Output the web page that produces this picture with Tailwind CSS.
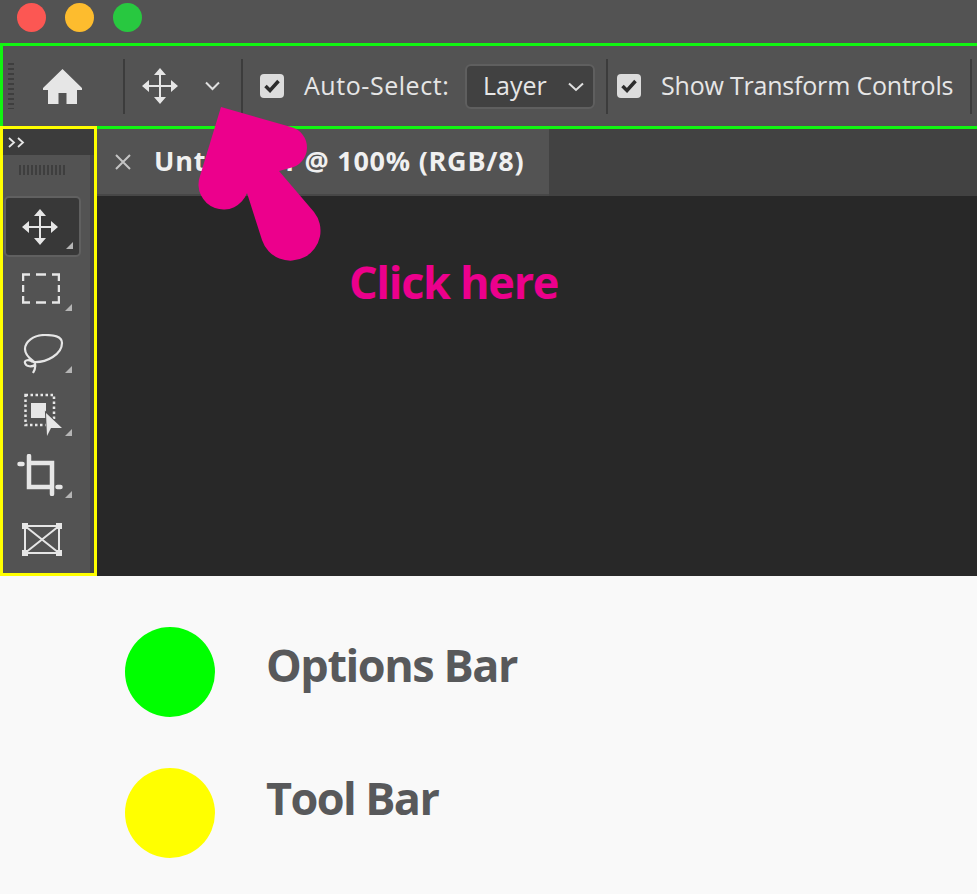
<!DOCTYPE html>
<html lang="en">
<head>
    <meta charset="UTF-8">
    <title>Photoshop Options Bar and Tool Bar</title>
    <script src="https://cdn.jsdelivr.net/npm/@tailwindcss/browser@4"></script>
</head>
<body class="bg-[#f9f9f9] font-['Open_Sans',sans-serif]">
    <div class="relative w-[977px] h-[894px] overflow-hidden">
        <!-- Title bar -->
        <div class="h-[43px] bg-[#535353] flex items-center pb-[9px] pl-[17px] gap-[19px]">
            <div class="w-[29px] h-[29px] rounded-full bg-[#fc5753]"></div>
            <div class="w-[29px] h-[29px] rounded-full bg-[#fdbc2e]"></div>
            <div class="w-[29px] h-[29px] rounded-full bg-[#28c840]"></div>
        </div>

        <!-- Options bar -->
        <div class="h-[86px] border-[3px] border-r-0 border-[#11f511] bg-[#535353] flex items-center text-[#e6e6e6] text-[25px]">
            <div class="ml-[5px] w-[6px] h-[46px] bg-[repeating-linear-gradient(to_bottom,#3e3e3e_0,#3e3e3e_2px,transparent_2px,transparent_5px)]"></div>
            <svg class="ml-[29px] w-[39px] h-[35px]" viewBox="0 0 39 35" fill="#e6e6e6"><path d="M19.500 0 L39 19 L39 21 L34 21 L34 35 L23.500 35 L23.500 24 L15.500 24 L15.500 35 L5 35 L5 21 L0 21 L0 19 Z"/></svg>
            <div class="ml-[41px] w-[2px] h-[55px] bg-[#3c3c3c]"></div>
            <svg class="ml-[17px] w-[36px] h-[36px]" viewBox="0 0 36 36" fill="#e6e6e6"><path d="M18 0 L24 7 L12 7 Z M18 36 L24 29 L12 29 Z M0 18 L7 12 L7 24 Z M36 18 L29 12 L29 24 Z"/><path d="M18 5 V31 M5 18 H31" stroke="#e6e6e6" stroke-width="2"/></svg>
            <svg class="ml-[27px] w-[15px] h-[10px]" viewBox="0 0 15 10" fill="none" stroke="#e0e0e0" stroke-width="2"><path d="M1 1.500 L7.500 8 L14 1.500"/></svg>
            <div class="ml-[21px] w-[2px] h-[55px] bg-[#3c3c3c]"></div>
            <div class="ml-[17px] w-[24px] h-[24px] rounded-[4px] bg-[#dcdcdc] flex items-center justify-center">
                <svg class="w-[16px] h-[14px]" viewBox="0 0 16 14" fill="none" stroke="#2c2c2c" stroke-width="3.500"><path d="M1.500 7 L6 11.500 L14.500 2"/></svg>
            </div>
            <div class="ml-[20px] w-[161px] leading-none pb-[2px] tracking-[0.55px]">Auto-Select:</div>
            <div class="w-[130px] h-[45px] rounded-[6px] bg-[#414141] border-2 border-[#5f5f5f] flex items-center pl-[16px] pb-[2px] leading-none">
                Layer
                <svg class="ml-[21px] mt-[4px] w-[16px] h-[10px]" viewBox="0 0 16 10" fill="none" stroke="#e0e0e0" stroke-width="2"><path d="M1 1.500 L8 8 L15 1.500"/></svg>
            </div>
            <div class="ml-[11px] w-[2px] h-[55px] bg-[#3c3c3c]"></div>
            <div class="ml-[9px] w-[24px] h-[24px] rounded-[4px] bg-[#dcdcdc] flex items-center justify-center">
                <svg class="w-[16px] h-[14px]" viewBox="0 0 16 14" fill="none" stroke="#2c2c2c" stroke-width="3.500"><path d="M1.500 7 L6 11.500 L14.500 2"/></svg>
            </div>
            <div class="ml-[20px] w-[309px] leading-none pb-[2px] whitespace-nowrap tracking-[-0.2px]">Show Transform Controls</div>
            <div class="w-[2px] h-[55px] bg-[#3c3c3c]"></div>
        </div>

        <div class="flex h-[447px]">
            <!-- Tool bar -->
            <div class="relative -mt-[3px] w-[97px] h-[450px] border-[3px] border-[#ffff00] bg-[#535353] flex flex-col">
                <div class="h-[26px] bg-[#3c3c3c] flex items-center pl-[5px] gap-[1px] shrink-0">
                    <svg class="w-[17px] h-[11px]" viewBox="0 0 17 11" fill="none" stroke="#e6e6e6" stroke-width="1.800"><path d="M1 1 L6 5.500 L1 10 M10 1 L15 5.500 L10 10"/></svg>
                </div>
                <div class="ml-[16px] mt-[10px] w-[46px] h-[10px] shrink-0 bg-[repeating-linear-gradient(to_right,#3e3e3e_0,#3e3e3e_2px,transparent_2px,transparent_4px)]"></div>
                <div class="mt-[21px] w-[87px] flex flex-col">
                    <!-- Move -->
                    <div class="relative ml-[1px] w-[77px] h-[61px] rounded-[5px] bg-[#383838] border-2 border-[#606060] flex items-center justify-center pr-[5px] shrink-0">
                        <svg class="w-[36px] h-[36px]" viewBox="0 0 36 36" fill="#e6e6e6"><path d="M18 0 L24 7 L12 7 Z M18 36 L24 29 L12 29 Z M0 18 L7 12 L7 24 Z M36 18 L29 12 L29 24 Z"/><path d="M18 5 V31 M5 18 H31" stroke="#e6e6e6" stroke-width="2"/></svg>
                        <div class="absolute right-[6px] bottom-[6px] w-[7px] h-[7px] bg-[#b5b5b5] [clip-path:polygon(100%_0,100%_100%,0_100%)]"></div>
                    </div>
                    <!-- Marquee -->
                    <div class="relative h-[62px] shrink-0">
                        <svg class="absolute left-[19px] top-[16px] w-[38px] h-[31px]" viewBox="0 0 38 31" fill="none" stroke="#e6e6e6" stroke-width="2.500"><path d="M1 8 V1.500 H8 M14 1.500 H24 M30 1.500 H37 V8 M37 12 V19 M37 23 V29.500 H30 M24 29.500 H14 M8 29.500 H1 V23 M1 19 V12"/></svg>
                        <div class="absolute left-[62px] top-[47px] w-[7px] h-[7px] bg-[#b5b5b5] [clip-path:polygon(100%_0,100%_100%,0_100%)]"></div>
                    </div>
                    <!-- Lasso -->
                    <div class="relative h-[62px] shrink-0">
                        <svg class="absolute left-[20px] top-[15px] w-[42px] h-[42px]" viewBox="0 0 42 42" fill="none" stroke="#e6e6e6" stroke-width="2.200"><path d="M10 28 C24 29 39 20 39 9 C39 2 30 1 22 1 C10 1 2 8 2 15 C2 20 6 24 10 27 C13 29 13 34 10 39 M10 28 C6 25 1 26 2 29 C3 33 9 33 12 31"/></svg>
                        <div class="absolute left-[62px] top-[47px] w-[7px] h-[7px] bg-[#b5b5b5] [clip-path:polygon(100%_0,100%_100%,0_100%)]"></div>
                    </div>
                    <!-- Select subject -->
                    <div class="relative h-[62px] shrink-0">
                        <svg class="absolute left-[21px] top-[12px] w-[40px] h-[44px]" viewBox="0 0 40 44" fill="#e6e6e6"><path d="M1.500 2 H30 V32 H1.500 Z" fill="none" stroke="#e6e6e6" stroke-width="2.500" stroke-dasharray="2.500 2.500"/><path d="M7 10 H22 V25 H7 Z"/><path d="M22 20 L38 35 L27 35 L23 43 Z" stroke="#535353" stroke-width="2" paint-order="stroke"/></svg>
                        <div class="absolute left-[62px] top-[48px] w-[7px] h-[7px] bg-[#b5b5b5] [clip-path:polygon(100%_0,100%_100%,0_100%)]"></div>
                    </div>
                    <!-- Crop -->
                    <div class="relative h-[62px] shrink-0">
                        <svg class="absolute left-[14px] top-[11px] w-[46px] h-[42px]" viewBox="0 0 46 42" fill="none" stroke="#e6e6e6" stroke-width="4.500" stroke-linecap="round"><path d="M12 2 V33 H35 M12 9 H35 V40 M2.500 10 H5.500 M40.500 33 H43.500"/></svg>
                        <div class="absolute left-[62px] top-[48px] w-[7px] h-[7px] bg-[#b5b5b5] [clip-path:polygon(100%_0,100%_100%,0_100%)]"></div>
                    </div>
                    <!-- Frame -->
                    <div class="relative h-[62px] shrink-0">
                        <svg class="absolute left-[19px] top-[18px] w-[40px] h-[33px]" viewBox="0 0 40 33" fill="#e6e6e6"><path d="M3 3 H37 V30 H3 Z M3 3 L37 30 M37 3 L3 30" fill="none" stroke="#e6e6e6" stroke-width="2"/><rect x="0" y="0" width="6" height="6"/><rect x="34" y="0" width="6" height="6"/><rect x="0" y="27" width="6" height="6"/><rect x="34" y="27" width="6" height="6"/></svg>
                    </div>
                </div>
                <div class="absolute right-0 top-[26px] bottom-0 w-[4px] bg-[#464646]"></div>
            </div>

            <!-- Document area -->
            <div class="flex-1 flex flex-col">
                <div class="h-[67px] bg-[#424242] flex shrink-0">
                    <div class="w-[452px] bg-[#535353] border-b-2 border-[#474747] flex items-center pl-[18px]">
                        <svg class="w-[16px] h-[16px]" viewBox="0 0 16 16" fill="none" stroke="#c4c4c4" stroke-width="2"><path d="M1 1 L15 15 M15 1 L1 15"/></svg>
                        <span class="ml-[23px] pb-[2px] text-[27px] tracking-[0.75px] font-bold text-[#f0f0f0] leading-none whitespace-nowrap">Untitled-1 @ 100% (RGB/8)</span>
                    </div>
                </div>
                <div class="flex-1 bg-[#282828] pl-[252px] pt-[58px]">
                    <span class="text-[45px] tracking-[-1.3px] font-bold text-[#ec008c] leading-[56px] block">Click here</span>
                </div>
            </div>
        </div>

        <!-- Legend -->
        <div class="pl-[125px] pt-[51px] flex flex-col gap-[51px]">
            <div class="flex items-center gap-[51px]">
                <div class="w-[90px] h-[90px] rounded-full bg-[#00ff00]"></div>
                <span class="text-[45px] tracking-[-1.45px] font-bold text-[#58595b] leading-none pb-[15px]">Options Bar</span>
            </div>
            <div class="flex items-center gap-[51px]">
                <div class="w-[90px] h-[90px] rounded-full bg-[#ffff00]"></div>
                <span class="text-[45px] tracking-[-1.6px] font-bold text-[#58595b] leading-none pb-[32px]">Tool Bar</span>
            </div>
        </div>

        <!-- Pink arrow over the tab -->
        <svg class="absolute left-0 top-0 w-[977px] h-[894px] pointer-events-none" viewBox="0 0 977 894" fill="#ec008c"><path d="M221 107 L291 127 A21 21 0 0 1 290 168 L279 171 L314 212 A30 30 0 1 1 262 240 L247 193 A24 24 0 0 1 200 176 Z"/></svg>
    </div>
</body>
</html>
